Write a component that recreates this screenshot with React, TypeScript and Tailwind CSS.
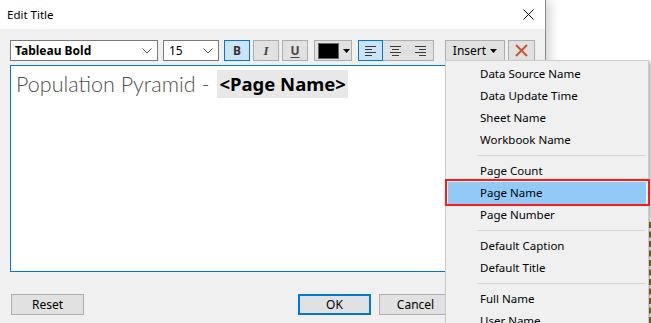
import React from "react";

const menuItems: (string | null)[] = [
  "Data Source Name",
  "Data Update Time",
  "Sheet Name",
  "Workbook Name",
  null,
  "Page Count",
  "Page Name",
  "Page Number",
  null,
  "Default Caption",
  "Default Title",
  null,
  "Full Name",
  "User Name",
];

const Chevron = () => (
  <svg width="10" height="6" viewBox="0 0 10 6" className="shrink-0">
    <path d="M0.5 0.5 L5 5 L9.5 0.5" fill="none" stroke="#555" strokeWidth="1" />
  </svg>
);

const AlignIcon = ({ kind }: { kind: "left" | "center" | "right" }) => {
  const rows = [11, 7, 11, 7];
  return (
    <svg width="11" height="10" viewBox="0 0 11 10">
      {rows.map((w, i) => {
        const x = kind === "left" ? 0 : kind === "right" ? 11 - w : (11 - w) / 2;
        return <rect key={i} x={x} y={i * 3} width={w} height="1" fill="#3b3b3b" />;
      })}
    </svg>
  );
};

const Dropdown = ({ label, width }: { label: string; width: string }) => (
  <div
    className={`${width} h-[21px] bg-white border border-[#7a7a7a] flex items-center justify-between pl-[4px] pr-[5px] font-bold text-[12px] text-black`}
  >
    <span>{label}</span>
    <Chevron />
  </div>
);

const FmtButton = ({ active, children }: { active?: boolean; children: React.ReactNode }) => (
  <div
    className={`w-[26px] h-[21px] flex items-center justify-center border ${
      active ? "bg-[#cce4f7] border-[#0078d7]" : "bg-[#e1e1e1] border-[#adadad]"
    }`}
  >
    {children}
  </div>
);

const DlgButton = ({ label, primary }: { label: string; primary?: boolean }) => (
  <div
    className={`w-[73px] h-[21px] flex items-center justify-center bg-[#e1e1e1] text-[12px] text-black ${
      primary ? "border-2 border-[#0078d7]" : "border border-[#adadad]"
    }`}
  >
    {label}
  </div>
);

export default function App() {
  return (
    <div className="relative w-[651px] h-[323px] overflow-hidden bg-white font-['Noto_Sans',sans-serif] text-black">
      {/* Dialog */}
      <div className="w-[546px] h-full flex flex-col border-r border-[#8a8a8a] shadow-[4px_0_10px_rgba(0,0,0,0.18)] relative z-10">
        {/* Title bar */}
        <div className="h-[29px] bg-white flex items-center justify-between pl-[7px] pr-[11px] shrink-0">
          <span className="text-[11.5px] leading-none">Edit Title</span>
          <svg width="11" height="11" viewBox="0 0 11 11">
            <path d="M0.5 0.5 L10.5 10.5 M10.5 0.5 L0.5 10.5" stroke="#111" strokeWidth="1" />
          </svg>
        </div>

        <div className="flex-1 bg-[#f0f0f0] flex flex-col px-[10px] pt-[11px]">
          {/* Toolbar */}
          <div className="flex items-center h-[21px]">
            <Dropdown label="Tableau Bold" width="w-[148px]" />
            <div className="w-[5px]" />
            <div className="w-[56px] h-[21px] bg-white border border-[#7a7a7a] flex items-center justify-between pl-[5px] pr-[5px] text-[12px]">
              <span>15</span>
              <Chevron />
            </div>
            <div className="w-[5px]" />
            <FmtButton active>
              <span className="font-bold text-[12px] text-[#333]">B</span>
            </FmtButton>
            <div className="w-[3px]" />
            <FmtButton>
              <span className="font-['Liberation_Serif',serif] italic font-bold text-[13px] text-[#444]">I</span>
            </FmtButton>
            <div className="w-[3px]" />
            <FmtButton>
              <span className="font-bold text-[12px] text-[#444] underline underline-offset-2">U</span>
            </FmtButton>
            <div className="w-[6px]" />
            <div className="w-[38px] h-[21px] bg-[#e1e1e1] border border-[#adadad] flex items-center pl-[3px] gap-[4px]">
              <div className="w-[21px] h-[16px] bg-black border border-[#666]" />
              <svg width="7" height="4" viewBox="0 0 7 4">
                <path d="M0 0 L7 0 L3.5 4 Z" fill="#000" />
              </svg>
            </div>
            <div className="w-[6px]" />
            <div className="w-[76px] h-[21px] bg-[#e1e1e1] border border-[#adadad] flex">
              <div className="w-[25px] -my-px -ml-px h-[21px] bg-[#cce4f7] border border-[#0078d7] flex items-center justify-center">
                <AlignIcon kind="left" />
              </div>
              <div className="w-[25px] flex items-center justify-center">
                <AlignIcon kind="center" />
              </div>
              <div className="w-[25px] flex items-center justify-center">
                <AlignIcon kind="right" />
              </div>
            </div>
            <div className="w-[11px]" />
            <div className="w-[60px] h-[21px] bg-[#e1e1e1] border border-[#adadad] flex items-center justify-center gap-[4px] text-[12px]">
              <span>Insert</span>
              <svg width="7" height="4" viewBox="0 0 7 4">
                <path d="M0 0 L7 0 L3.5 4 Z" fill="#000" />
              </svg>
            </div>
            <div className="w-[3px]" />
            <div className="w-[27px] h-[21px] bg-[#e1e1e1] border border-[#adadad] flex items-center justify-center">
              <svg width="13" height="13" viewBox="0 0 13 13">
                <path d="M1 1 L12 12 M12 1 L1 12" stroke="#c9553a" strokeWidth="2" />
              </svg>
            </div>
          </div>

          {/* Text area */}
          <div className="mt-[4px] h-[207px] bg-white border border-[#0078d7] px-[5px] pt-[4px]">
            <div className="flex items-center h-[28px]">
              <span className="font-['Lato',sans-serif] font-light text-[21.5px] text-[#505050] whitespace-pre">
                Population Pyramid -
              </span>
              <span className="ml-[8px] bg-[#e8e8e8] h-[28px] px-[2px] flex items-center font-bold text-[18.5px] text-black">
                &lt;Page Name&gt;
              </span>
            </div>
          </div>

          {/* Bottom buttons */}
          <div className="flex items-center mt-[22px] pl-px">
            <DlgButton label="Reset" />
            <div className="flex-1" />
            <DlgButton label="OK" primary />
            <div className="w-[8px]" />
            <DlgButton label="Cancel" />
            <div className="w-[83px]" />
          </div>
        </div>
      </div>

      {/* dashed edge of a window behind */}
      <div className="absolute right-0 top-[222px] w-[2px] h-[101px] border-l-2 border-dashed border-[#9a6a2e]" />

      {/* Insert menu */}
      <div className="absolute left-[445px] top-[60px] w-[204px] bg-[#f0f0f0] border border-[#cccccc] p-[2px] z-20 shadow-[2px_2px_3px_rgba(0,0,0,0.3)]">
        {menuItems.map((item, i) =>
          item === null ? (
            <div key={i} className="h-[9px] flex items-center pl-[29px] pr-px">
              <div className="w-full h-px bg-[#d7d7d7]" />
            </div>
          ) : (
            <div
              key={i}
              className={`h-[22px] flex items-center pl-[32px] text-[11.5px] ${
                item === "Page Name" ? "bg-[#91c9f7]" : ""
              }`}
            >
              {item}
            </div>
          )
        )}
      </div>

      {/* highlight annotation */}
      <div className="absolute left-[445px] top-[179px] w-[205px] h-[27px] border-2 border-[#ff1a1a] z-30" />
    </div>
  );
}
